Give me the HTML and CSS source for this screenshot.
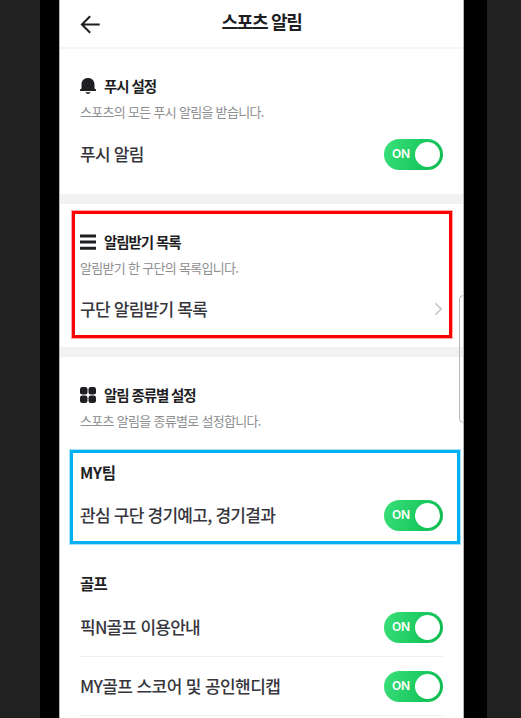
FILE: index.html
```html
<!DOCTYPE html>
<html lang="ko">
<head>
<meta charset="utf-8">
<title>스포츠 알림</title>
<link rel="stylesheet" href="styles.css">
</head>
<body>
<div class="frame">
<main class="phone">
  <header class="header">
    <svg class="back" width="20" height="20" viewBox="0 0 20 20"><path d="M10.200 1.200 1.900 9.500l8.300 8.300M1.900 9.500H19.700" fill="none" stroke="#1e1e23" stroke-width="2"/></svg>
    <h1>스포츠 알림</h1>
  </header>

  <section class="section push">
    <h2><svg width="16" height="16" viewBox="0 0 16 16"><path d="M8 .1C4.200.1 1.500 2.700 1.500 6.300v4.200L0 11.600v1.500h16v-1.500l-1.500-1.100V6.300C14.500 2.700 11.800.1 8 .1ZM5.400 14.200h5.200c-.4 1.100-1.300 1.700-2.600 1.700s-2.200-.6-2.600-1.700Z" fill="#1e1e23"/></svg>푸시 설정</h2>
    <p class="desc">스포츠의 모든 푸시 알림을 받습니다.</p>
    <div class="row"><span>푸시 알림</span><span class="toggle">ON</span></div>
  </section>

  <section class="section list">
    <h2><svg width="16" height="16" viewBox="0 0 16 16"><path d="M0 .4h16v3H0zM0 6.600h16v3H0zM0 12.700h16v3H0z" fill="#1e1e23"/></svg>알림받기 목록</h2>
    <p class="desc">알림받기 한 구단의 목록입니다.</p>
    <div class="row"><span>구단 알림받기 목록</span><svg class="chevron" width="9" height="14" viewBox="0 0 9 14"><path d="M1.300 1.200 7.200 7l-5.900 5.800" fill="none" stroke="#c4c4c6" stroke-width="1.5"/></svg></div>
    <div class="mark mark-red"></div>
  </section>

  <section class="section kinds">
    <h2><svg width="16" height="16" viewBox="0 0 16 16" fill="#1e1e23"><rect width="7.500" height="7.500" rx="2.300"/><rect x="8.500" width="7.500" height="7.500" rx="2.300"/><rect y="8.500" width="7.500" height="7.500" rx="2.300"/><rect x="8.500" y="8.500" width="7.500" height="7.500" rx="2.300"/></svg>알림 종류별 설정</h2>
    <p class="desc">스포츠 알림을 종류별로 설정합니다.</p>
    <div class="group team">
      <h3>MY팀</h3>
      <div class="row"><span>관심 구단 경기예고, 경기결과</span><span class="toggle">ON</span></div>
      <div class="mark mark-blue"></div>
    </div>
    <div class="group golf">
      <h3>골프</h3>
      <div class="row lined"><span>픽N골프 이용안내</span><span class="toggle">ON</span></div>
      <div class="row lined wide"><span>MY골프 스코어 및 공인핸디캡</span><span class="toggle">ON</span></div>
    </div>
  </section>
  <div class="edge-handle"></div>
</main>
</div>
</body>
</html>
```
FILE: styles.css
```css
* { box-sizing: border-box; }
html, body { height: 100%; margin: 0; overflow: hidden; }
body {
  background: #212121;
  color: #1e1e23;
  font-family: "Noto Sans CJK KR", sans-serif;
}
h1, h2, h3, p { margin: 0; }
svg { display: block; flex: none; }

.frame {
  width: 447px;
  height: 718px;
  margin-left: 40px;
  padding: 0 23px 0 19px;
  background: #000;
}
.phone {
  position: relative;
  height: 718px;
  overflow: hidden;
  background: #fff;
  border-left: 1px solid #b5b5b5;
  border-right: 1px solid #b5b5b5;
}
.header {
  display: grid;
  grid-template-columns: 20px 1fr 20px;
  height: 49px;
  padding: 0 20px;
  border-bottom: 2px solid #f5f5f6;
}
.back { margin-top: 15px; }
.header h1 {
  margin-top: 7px;
  font-size: 18px;
  line-height: 28px;
  letter-spacing: -1.3px;
  text-align: center;
}
.section {
  position: relative;
  padding: 27px 20px 0;
}
.push { height: 155px; border-bottom: 10px solid #f1f2f4; }
.list { height: 153px; padding-top: 28px; border-bottom: 10px solid #f1f2f4; }
h2 {
  display: flex;
  align-items: center;
  gap: 8px;
  height: 20px;
  font-size: 14.5px;
  line-height: 20px;
  letter-spacing: -1.1px;
}
.desc {
  margin-top: 6px;
  font-size: 13px;
  line-height: 20px;
  letter-spacing: -.7px;
  color: #8e8e90;
}
.row {
  display: flex;
  align-items: center;
  justify-content: space-between;
  height: 58px;
  margin-top: 2px;
  font-size: 17px;
  font-weight: 500;
  line-height: 26px;
  letter-spacing: -.75px;
  color: #36363c;
}
.push .row { margin-top: 3px; }
.wide { letter-spacing: -.6px; }
.toggle {
  display: flex;
  align-items: center;
  justify-content: space-between;
  width: 59px;
  height: 31px;
  padding: 0 3px 0 8px;
  border-radius: 16px;
  background: linear-gradient(110deg, #36dc75 10%, #16c65c 70%, #10b950);
  color: #fff;
  font: 600 12px/16px Inter, sans-serif;
  letter-spacing: -.2px;
}
.toggle::after {
  content: "";
  width: 25px;
  height: 25px;
  border-radius: 50%;
  background: #fff;
}
h3 {
  font-size: 15.5px;
  line-height: 24px;
  letter-spacing: -.7px;
}
.group { position: relative; }
.kinds { padding-top: 28px; }
.team { height: 111px; padding-top: 29px; }
.team h3 { letter-spacing: -.2px; }
.golf { padding-top: 29px; }
.golf .row { margin-top: 0; }
.golf .lined { height: 59px; border-bottom: 1px solid #efeff0; }
.golf h3 + .row { margin-top: 3px; }

.mark { position: absolute; border: 3px solid; }
.mark-red {
  top: 7px;
  left: 12px;
  width: 380px;
  height: 127px;
  border-color: #f00;
  box-shadow: 0 0 0 1px rgba(255, 0, 0, .35);
}
.mark-blue {
  top: 19px;
  left: -10px;
  width: 390px;
  height: 94px;
  border-color: #00b0f0;
  box-shadow: 0 0 0 1px rgba(0, 176, 240, .35);
}
.edge-handle {
  position: absolute;
  top: 295px;
  right: -1px;
  width: 5px;
  height: 128px;
  border: 1px solid #b9b9b9;
  border-right: 0;
  border-radius: 5px 0 0 5px;
}
```
